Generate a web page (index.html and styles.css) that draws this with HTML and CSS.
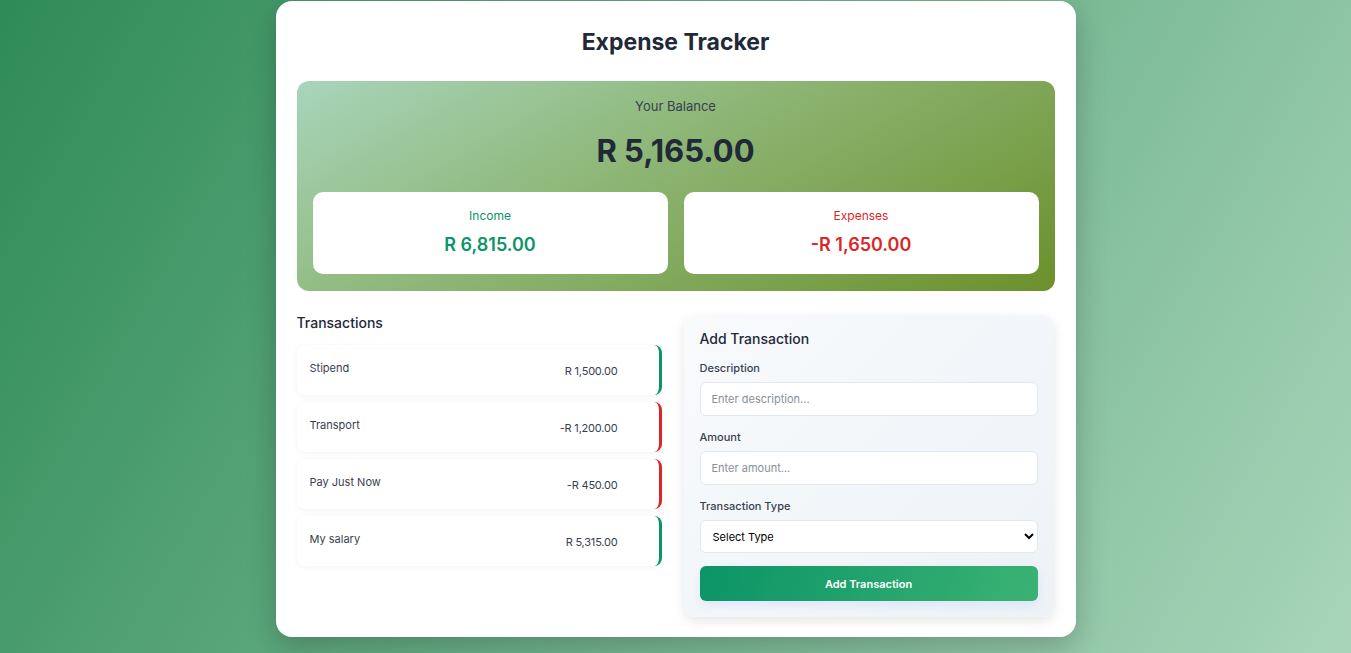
FILE: index.html
```html
<!DOCTYPE html>
<html lang="en">
<head>
<meta charset="UTF-8">
<title>Expense Tracker</title>
<link rel="stylesheet" href="styles.css">
</head>
<body>
<main class="card">
  <h1 class="title">Expense Tracker</h1>

  <section class="balance">
    <div class="balance-label">Your Balance</div>
    <div class="balance-amount">R 5,165.00</div>
    <div class="summary">
      <div class="summary-box">
        <div class="summary-label income">Income</div>
        <div class="summary-value income">R 6,815.00</div>
      </div>
      <div class="summary-box">
        <div class="summary-label expense">Expenses</div>
        <div class="summary-value expense">-R 1,650.00</div>
      </div>
    </div>
  </section>

  <div class="columns">
    <section class="history">
      <h2 class="section-title">Transactions</h2>
      <ul class="tx-list">
        <li class="tx plus"><span class="tx-name">Stipend</span><span class="tx-amount">R 1,500.00</span></li>
        <li class="tx minus"><span class="tx-name">Transport</span><span class="tx-amount">-R 1,200.00</span></li>
        <li class="tx minus"><span class="tx-name">Pay Just Now</span><span class="tx-amount">-R 450.00</span></li>
        <li class="tx plus"><span class="tx-name">My salary</span><span class="tx-amount">R 5,315.00</span></li>
      </ul>
    </section>

    <section class="form-panel">
      <h2 class="form-title">Add Transaction</h2>
      <form class="form">
        <label class="field-label" for="desc">Description</label>
        <input class="field" id="desc" type="text" placeholder="Enter description...">
        <label class="field-label" for="amt">Amount</label>
        <input class="field" id="amt" type="text" placeholder="Enter amount...">
        <label class="field-label" for="type">Transaction Type</label>
        <select class="field select" id="type">
          <option>Select Type</option>
          <option>Income</option>
          <option>Expense</option>
        </select>
        <button class="submit" type="button">Add Transaction</button>
      </form>
    </section>
  </div>
</main>
</body>
</html>
```

FILE: styles.css
```css
* { box-sizing: border-box; }

html, body { height: 100%; }

body {
  margin: 0;
  min-height: 100vh;
  font-family: "Inter", "Noto Sans", sans-serif;
  background: linear-gradient(120deg, #2e8b57 0%, #a8d5ba 100%);
  background-attachment: fixed;
  color: #1f2937;
  overflow: hidden;
}

.card {
  width: 800px;
  margin: 1px auto 0;
  height: 636px;
  background: #fff;
  border-radius: 16px;
  padding: 22px 21px 21px;
  box-shadow: 0 10px 30px rgba(0, 0, 0, 0.22);
}

.title {
  margin: 0 0 20px;
  text-align: center;
  font-size: 23px;
  line-height: 38px;
  font-weight: 700;
  color: #1f2937;
}

.balance {
  border-radius: 12px;
  padding: 16px 16px 17px;
  background: linear-gradient(150deg, #a8d5bc 0%, #8fb87a 40%, #6b902b 100%);
  text-align: center;
}

.balance-label {
  font-size: 13px;
  line-height: 18px;
  color: #374151;
}

.balance-amount {
  margin-top: 16px;
  font-size: 31px;
  line-height: 40px;
  font-weight: 700;
  color: #1f2937;
}

.summary {
  margin-top: 21px;
  display: flex;
  gap: 16px;
}

.summary-box {
  flex: 1;
  height: 82px;
  background: #fff;
  border-radius: 10px;
  padding: 16px 10px;
  display: flex;
  flex-direction: column;
  align-items: center;
  gap: 8px;
}

.summary-label {
  font-size: 12px;
  line-height: 16px;
}

.summary-value {
  font-size: 18px;
  line-height: 26px;
  font-weight: 600;
}

.income { color: #0b9467; }
.expense { color: #dc2626; }

.columns {
  margin-top: 24px;
  display: flex;
  gap: 22px;
  align-items: flex-start;
}

.history {
  width: 365px;
}

.section-title {
  margin: 0 0 14px;
  font-size: 14px;
  line-height: 16px;
  font-weight: 500;
  color: #1f2937;
}

.tx-list {
  list-style: none;
  margin: 0;
  padding: 0;
  display: flex;
  flex-direction: column;
  gap: 7px;
}

.tx {
  height: 50px;
  display: flex;
  align-items: center;
  justify-content: space-between;
  padding: 0 41px 0 13px;
  background: #fff;
  border-radius: 8px;
  border-right: 3px solid;
  box-shadow: 0 1px 6px rgba(0, 0, 0, 0.05);
  font-size: 11px;
  color: #374151;
}

.tx.plus { border-right-color: #0b9467; }
.tx.minus { border-right-color: #dc2626; }

.tx-name { margin-bottom: 4px; }
.tx-amount { margin-top: 2px; letter-spacing: -0.2px; }

.form-panel {
  width: 370px;
  border-radius: 12px;
  padding: 16px;
  background: linear-gradient(135deg, #f8fafc 0%, #eef2f7 100%);
  box-shadow: 0 4px 12px rgba(0, 0, 0, 0.1);
}

.form-title {
  margin: 0 0 14px;
  font-size: 14px;
  line-height: 16px;
  font-weight: 500;
  color: #1f2937;
}

.form {
  display: flex;
  flex-direction: column;
}

.field-label {
  font-size: 11px;
  line-height: 14px;
  font-weight: 500;
  color: #374151;
  margin-bottom: 7px;
}

.field {
  height: 34px;
  border: 1px solid #e2e8f0;
  border-radius: 6px;
  background: #fff;
  padding: 0 11px;
  font-family: inherit;
  font-size: 11px;
  color: #111;
  margin-bottom: 14px;
  outline: none;
}

.field::placeholder { color: #8a8f98; }

.select {
  height: 33px;
  padding: 0 8px;
  color: #000;
  margin-bottom: 13px;
}

.submit {
  height: 35px;
  border: none;
  border-radius: 6px;
  background: linear-gradient(110deg, #0b9467 0%, #3bb273 100%);
  color: #fff;
  font-family: inherit;
  font-size: 11px;
  font-weight: 600;
  box-shadow: 0 4px 10px rgba(59, 130, 246, 0.12);
}
```
